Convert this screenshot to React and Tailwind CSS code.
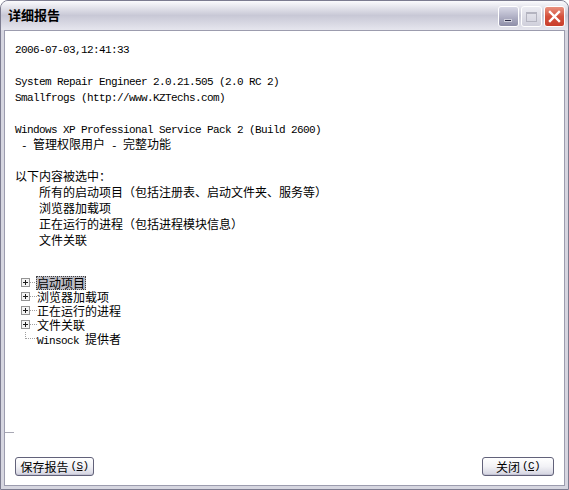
import React from 'react';

const mono = "font-['Liberation_Mono',monospace] text-[11px] tracking-[-0.6px]";
const cjk = "font-['Noto_Sans_CJK_SC',sans-serif] text-[12px]";

function M({children}) {
    return <span className={mono}>{children}</span>;
}

function C({children}) {
    return <span className={cjk}>{children}</span>;
}

function Line({children}) {
    return <div className="h-[16px] leading-[16px] whitespace-pre text-black">{children}</div>;
}

// + box and dotted connector of one tree row
function TreeGlyph({last, plus}) {
    return (
        <svg width="16" height="14" viewBox="0 0 16 14" shapeRendering="crispEdges">
            {plus ? (
                <>
                    <rect x="0.5" y="2.5" width="8" height="8" fill="#f4f4f4" stroke="#949494" />
                    <line x1="2" y1="6.5" x2="7" y2="6.5" stroke="#1c1c1c" />
                    <line x1="4.5" y1="4" x2="4.5" y2="9" stroke="#1c1c1c" />
                    <line x1="9" y1="6.5" x2="16" y2="6.5" stroke="#a0a0a0" strokeDasharray="1 1" />
                </>
            ) : (
                <>
                    {last && <line x1="4.5" y1="0" x2="4.5" y2="7" stroke="#a0a0a0" strokeDasharray="1 1" />}
                    <line x1="5" y1="6.5" x2="16" y2="6.5" stroke="#a0a0a0" strokeDasharray="1 1" />
                </>
            )}
        </svg>
    );
}

function TreeRow({children, plus = true, last = false, selected = false}) {
    return (
        <div className="flex items-center h-[14px] pl-[16px]">
            <TreeGlyph plus={plus} last={last} />
            <span
                className={
                    'h-[14px] leading-[14px] px-[1px] -ml-[1px] ' +
                    (selected ? 'bg-[#bcbcc4] outline outline-1 outline-dotted outline-[#404040] -outline-offset-1' : '')
                }
            >
                {children}
            </span>
        </div>
    );
}

function XpButton({children, className}) {
    return (
        <button
            className={
                'h-[19px] rounded-[3px] border border-[#62627a] bg-gradient-to-b from-white via-[#f2f2f6] to-[#d4d4e0] flex items-center justify-center text-black shadow-[inset_0_-1px_0_#c4c4d4] ' +
                className
            }
        >
            {children}
        </button>
    );
}

export default function App() {
    return (
        <div className="w-[569px] h-[490px] bg-white">
            <div className="w-full h-full flex flex-col rounded-t-[8px] border border-[#7c7c90] bg-[#d6d6e0]">
                {/* Barra de título */}
                <div className="h-[29px] flex items-start justify-between pl-[7px] pr-[3px] rounded-t-[7px] bg-gradient-to-b from-[#fbfbfd] via-[#c8c8d6] to-[#e6e6ee]">
                    <span className="mt-[5px] font-['Noto_Sans_CJK_SC',sans-serif] text-[13px] font-bold leading-[18px] text-black">
                        详细报告
                    </span>
                    <div className="flex gap-[2px] mt-[5px]">
                        <div className="w-[21px] h-[21px] rounded-[3px] border border-white bg-gradient-to-b from-[#d8d8e6] to-[#8e8ea8] flex items-end justify-start pl-[5px] pb-[4px]">
                            <div className="w-[8px] h-[3px] bg-[#2e2e48] border border-[#d0d0dc]" />
                        </div>
                        <div className="w-[21px] h-[21px] rounded-[3px] border border-white bg-gradient-to-b from-[#ececf2] to-[#cfcfdb] flex items-center justify-center">
                            <div className="w-[11px] h-[10px] border border-[#b4b4c0] border-t-2" />
                        </div>
                        <div className="w-[21px] h-[21px] rounded-[3px] border border-white bg-gradient-to-b from-[#e8907e] via-[#d4503c] to-[#c83e2c] flex items-center justify-center">
                            <svg width="13" height="13" viewBox="0 0 13 13">
                                <path d="M2 2 L11 11 M11 2 L2 11" stroke="white" strokeWidth="2.4" strokeLinecap="square" />
                            </svg>
                        </div>
                    </div>
                </div>

                {/* Área cliente */}
                <div className="flex-1 flex flex-col mx-[3px] mb-[3px] border border-[#9c9cae] bg-white">
                    <div className="pt-[8px] pl-[10px]">
                        <Line><M>2006-07-03,12:41:33</M></Line>
                        <Line> </Line>
                        <Line><M>System Repair Engineer 2.0.21.505 (2.0 RC 2)</M></Line>
                        <Line><M>Smallfrogs (http://www.KZTechs.com)</M></Line>
                        <Line> </Line>
                        <Line><M>Windows XP Professional Service Pack 2 (Build 2600)</M></Line>
                        <Line><M> - </M><C>管理权限用户</C><M> - </M><C>完整功能</C></Line>
                        <Line> </Line>
                        <Line><C>以下内容被选中：</C></Line>
                        <Line><M>    </M><C>所有的启动项目（包括注册表、启动文件夹、服务等）</C></Line>
                        <Line><M>    </M><C>浏览器加载项</C></Line>
                        <Line><M>    </M><C>正在运行的进程（包括进程模块信息）</C></Line>
                        <Line><M>    </M><C>文件关联</C></Line>
                    </div>

                    {/* Árbol */}
                    <div className={'mt-[29px] text-black ' + cjk}>
                        <TreeRow selected>启动项目</TreeRow>
                        <TreeRow>浏览器加载项</TreeRow>
                        <TreeRow>正在运行的进程</TreeRow>
                        <TreeRow>文件关联</TreeRow>
                        <TreeRow plus={false} last>
                            <M>Winsock </M>提供者
                        </TreeRow>
                    </div>

                    <div className="flex-1" />
                    <div className="w-[9px] h-[1px] bg-[#a8a8b4]" />

                    <div className="flex justify-between mt-[24px] mb-[9px] pl-[10px] pr-[10px]">
                        <XpButton className="w-[79px]">
                            <C>保存报告</C>
                            <span className={mono + ' ml-[2px]'}>
                                (<span className="underline">S</span>)
                            </span>
                        </XpButton>
                        <XpButton className="w-[72px]">
                            <C>关闭</C>
                            <span className={mono + ' ml-[2px]'}>
                                (<span className="underline">C</span>)
                            </span>
                        </XpButton>
                    </div>
                </div>
            </div>
        </div>
    );
}
